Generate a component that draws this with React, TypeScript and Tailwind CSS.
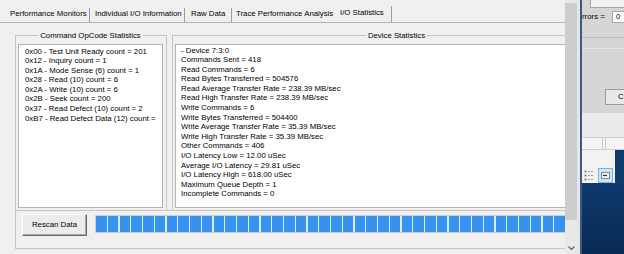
import React from "react";

const opcodeLines = [
  "0x00 - Test Unit Ready count = 201",
  "0x12 - Inquiry count = 1",
  "0x1A - Mode Sense (6) count = 1",
  "0x28 - Read (10) count = 6",
  "0x2A - Write (10) count = 6",
  "0x2B - Seek count = 200",
  "0x37 - Read Defect (10) count = 2",
  "0xB7 - Read Defect Data (12) count =",
];

const deviceLines = [
  "- Device 7:3:0",
  "Commands Sent = 418",
  "Read Commands = 6",
  "Read Bytes Transferred = 504576",
  "Read Average Transfer Rate = 238.39 MB/sec",
  "Read High Transfer Rate = 238.39 MB/sec",
  "Write Commands = 6",
  "Write Bytes Transferred = 504400",
  "Write Average Transfer Rate = 35.39 MB/sec",
  "Write High Transfer Rate = 35.39 MB/sec",
  "Other Commands = 406",
  "I/O Latency Low = 12.00 uSec",
  "Average I/O Latency = 29.81 uSec",
  "I/O Latency High = 618.00 uSec",
  "Maximum Queue Depth = 1",
  "Incomplete Commands = 0",
];

function Tabs() {
  return (
    <div className="flex h-[23px] shrink-0 items-end whitespace-nowrap border-b border-[#b4b4b4]">
      <div className="h-[14px] w-[90px] border-r border-[#9c9c9c] pl-[10px] pt-[1px]">Performance Monitors</div>
      <div className="h-[14px] w-[95px] border-r border-[#9c9c9c] pl-[5px] pt-[1px]">Individual I/O Information</div>
      <div className="h-[14px] w-[47px] border-r border-[#9c9c9c] pl-[6px] pt-[1px]">Raw Data</div>
      <div className="h-[14px] w-[102px] pl-[4px] pt-[1px]">Trace Performance Analysis</div>
      <div className="h-[16px] w-[58px] border-r border-[#9c9c9c] pl-[6px] pt-[2px]">I/O Statistics</div>
    </div>
  );
}

function ProgressBar() {
  const segments = Array.from({ length: 46 });
  return (
    <div className="ml-[8px] mt-[1px] h-[18px] w-[520px] shrink-0 overflow-hidden border border-[#cfcfcf] bg-[#dcecfa]">
      <div className="flex h-full gap-[1.25px]">
        {segments.map((_, i) => (
          <div key={i} className="h-full w-[10.5px] shrink-0 bg-[#3592ee]" />
        ))}
      </div>
    </div>
  );
}

function MainPanel() {
  return (
    <div className="flex h-full w-[565px] shrink-0 flex-col overflow-hidden">
      <Tabs />
      <div className="ml-[15px] flex w-[607px] shrink-0 flex-col pt-[8px]">
        <div className="flex gap-[5px]">
          <fieldset className="w-[152px] min-w-0 shrink-0 border border-b-0 border-[#c5c5c5] pb-[2px] pl-[2px] pr-[3px]">
            <legend className="mx-auto px-[2px]">Command OpCode Statistics</legend>
            <div className="mt-[3px] h-[164px] w-[145px] overflow-hidden whitespace-nowrap border border-[#b3b3b3] bg-white pl-[6px] pr-[4px] pt-[2px]">
              {opcodeLines.map((l) => (
                <div key={l}>{l}</div>
              ))}
            </div>
          </fieldset>
          <fieldset className="w-[450px] min-w-0 shrink-0 border border-b-0 border-[#c5c5c5] pb-[2px] pl-[2px] pr-[3px]">
            <legend className="mx-auto px-[2px]">Device Statistics</legend>
            <div className="mt-[3px] h-[164px] overflow-hidden whitespace-nowrap border border-[#b3b3b3] bg-white pl-[5px] pt-[1px]">
              {deviceLines.map((l) => (
                <div key={l}>{l}</div>
              ))}
            </div>
          </fieldset>
        </div>
        <div className="flex h-[39px] items-start border border-r-0 border-[#c5c5c5] pl-[6px] pt-[3px]">
          <button className="h-[22px] w-[65px] shrink-0 border border-b-[#6a6a6a] border-l-white border-r-[#6a6a6a] border-t-white bg-[#ececec] shadow-[inset_-1px_-1px_0_#a8a8a8]">
            Rescan Data
          </button>
          <ProgressBar />
        </div>
      </div>
    </div>
  );
}

function Scrollbar() {
  return (
    <div className="flex h-full w-[12px] shrink-0 flex-col bg-[#e9e9e9]">
      <div className="h-[3px]" />
      <div className="h-[217px] bg-[#cdcdcd]" />
      <div className="flex-1" />
      <div className="flex h-[12px] items-center justify-center">
        <svg width="7" height="5" viewBox="0 0 7 5">
          <path d="M0.5 0.5 L3.5 3.5 L6.5 0.5" fill="none" stroke="#606060" strokeWidth="1.2" />
        </svg>
      </div>
    </div>
  );
}

function SideWindow() {
  return (
    <div className="flex h-full w-[42px] shrink-0 flex-col overflow-hidden bg-[#d6d6d6] whitespace-nowrap">
      <div className="h-[8px] shrink-0 pl-[8px]">
        <div className="h-full w-[40px] border-x border-b border-[#a5a5a5] bg-[#f2f2f2]" />
      </div>
      <div className="flex h-[18px] shrink-0 items-center">
        <span>rrors =</span>
        <div className="ml-auto h-[12px] w-[12px] border border-r-0 border-[#a5a5a5] bg-white pl-[3px]">0</div>
      </div>
      <div className="h-[12px] shrink-0 border-b border-[#bdbdbd]" />
      <div className="h-[11px] shrink-0 border-b border-[#e6e6e6]" />
      <div className="h-[40px] shrink-0" />
      <div className="h-[16px] shrink-0 pl-[23px]">
        <div className="h-full w-[40px] border border-[#9a9a9a] bg-[#e8e8e8] pl-[12px] pt-[2px]">C</div>
      </div>
      <div className="h-[8px] shrink-0" />
      <div className="h-[24px] shrink-0 bg-[#ebebeb]" />
      <div className="flex h-[13px] shrink-0 border-y border-[#cfcfcf] bg-[#f5f5f5]">
        <div className="w-[21px] border-r border-[#c8c8c8]" />
        <div className="w-[3px] border-r border-[#c8c8c8]" />
      </div>
      <div className="flex h-[33px] shrink-0">
        <div className="flex w-[33px] flex-col bg-[#f2f2f2]">
          <div className="h-[18px]" />
          <div className="flex items-start gap-[3px] pl-[2px]">
            <svg width="11" height="11" viewBox="0 0 11 11" className="mt-[2px]">
              <rect x="0.5" y="0.5" width="2" height="2" fill="#8a8a8a" />
              <rect x="0.5" y="4.5" width="2" height="2" fill="#8a8a8a" />
              <rect x="0.5" y="8.5" width="2" height="2" fill="#8a8a8a" />
              <path d="M4 1.5H10M4 5.5H10M4 9.5H10" stroke="#9a9a9a" strokeWidth="1" strokeDasharray="2 1" />
            </svg>
            <div className="flex h-[15px] w-[15px] items-center justify-center border border-[#7fb2e3] bg-[#cce4f7]">
              <svg width="9" height="7" viewBox="0 0 9 7">
                <rect x="0.5" y="0.5" width="8" height="6" fill="#f4f4f4" stroke="#8a8a8a" />
                <path d="M2 3.5H6" stroke="#333" strokeWidth="1.2" />
              </svg>
            </div>
          </div>
        </div>
        <div className="flex-1 bg-[#0e3a6c]" />
      </div>
      <div className="flex-1 bg-linear-to-b from-[#0e3a6c] to-[#0a2a55]" />
    </div>
  );
}

export default function App() {
  return (
    <div className="flex h-[254px] w-[624px] overflow-hidden bg-[#f0f0f0] font-['Liberation_Sans',Arial,sans-serif] text-[7.8px] leading-[9.58px] text-black">
      <MainPanel />
      <Scrollbar />
      <div className="h-full w-[3px] shrink-0 bg-[#e4e6ea]" />
      <div className="h-full w-[2px] shrink-0 bg-[#3c5a80]" />
      <SideWindow />
    </div>
  );
}
